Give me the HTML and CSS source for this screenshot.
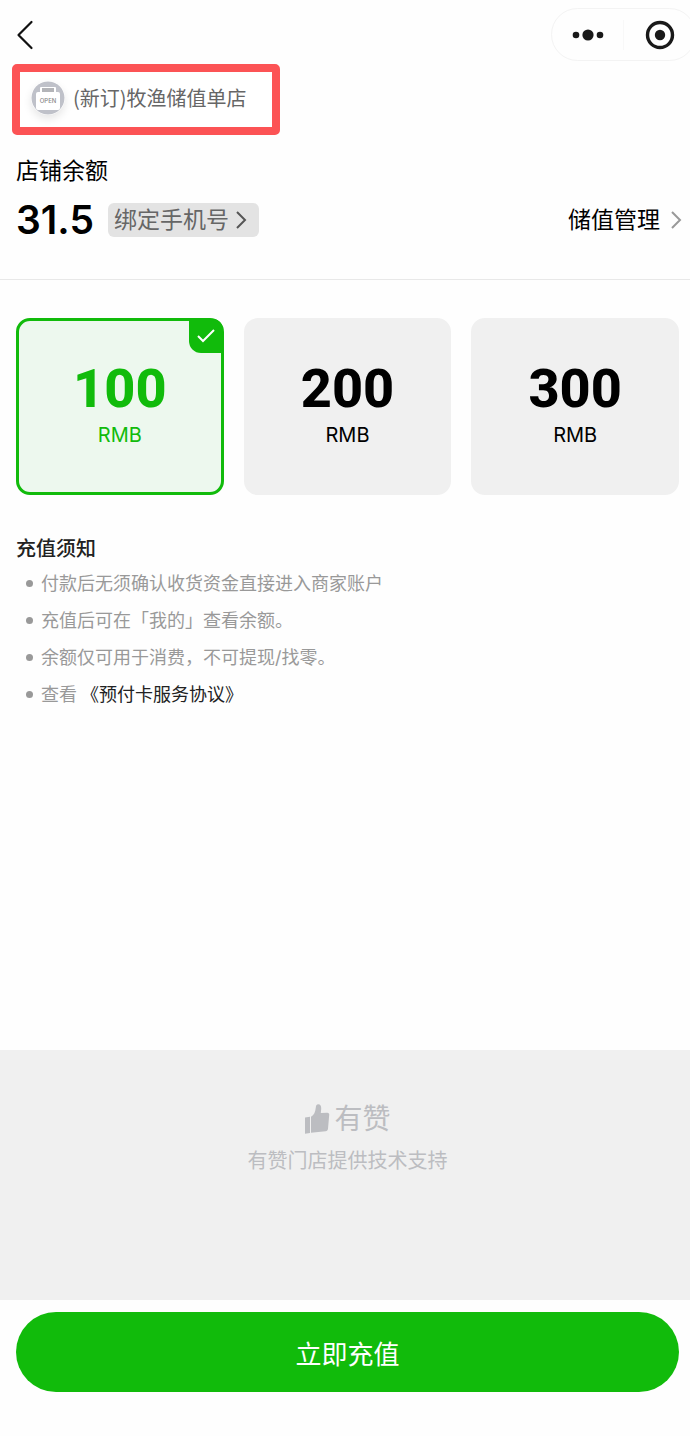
FILE: index.html
```
<!DOCTYPE html>
<html lang="zh-CN">
<head>
    <meta charset="UTF-8">
    <meta name="viewport" content="width=device-width, initial-scale=1.0">
    <title>储值</title>
    <link rel="stylesheet" href="styles.css">
</head>
<body>
    <header class="navbar">
        <button class="back" type="button" aria-label="返回">
            <svg width="18" height="30" viewBox="0 0 18 30"><path d="M15.500 2 2.500 15l13 13" fill="none" stroke="#111" stroke-width="2.200" stroke-linecap="round" stroke-linejoin="round"/></svg>
        </button>
        <div class="capsule">
            <button type="button" aria-label="更多">
                <svg width="32" height="14" viewBox="0 0 32 14" fill="#191919"><circle cx="4" cy="7" r="3.300"/><circle cx="16" cy="7" r="5.600"/><circle cx="28" cy="7" r="3.300"/></svg>
            </button>
            <button type="button" aria-label="关闭">
                <svg width="30" height="30" viewBox="0 0 30 30"><circle cx="15" cy="15" r="12.500" fill="none" stroke="#191919" stroke-width="3.400"/><circle cx="15" cy="15" r="5.200" fill="#191919"/></svg>
            </button>
        </div>
    </header>

    <main>
        <div class="shop">
            <svg class="shop-logo" width="34" height="34" viewBox="0 0 34 34">
                <circle cx="17" cy="17" r="16.500" fill="#bfc1c9"/>
                <rect x="9" y="6" width="16" height="8" rx="1" fill="#fff"/>
                <rect x="11" y="7" width="12" height="4" fill="#b3b4b8"/>
                <rect x="5" y="11" width="24" height="18" rx="2" fill="#fff"/>
                <text x="17" y="22" text-anchor="middle" class="logo-text">OPEN</text>
            </svg>
            <span>(新订)牧渔储值单店</span>
        </div>

        <!-- 余额 -->
        <section class="balance">
            <h2>店铺余额</h2>
            <div class="balance-row">
                <strong class="amount">31.5</strong>
                <button class="bind" type="button">绑定手机号
                    <svg width="12" height="20" viewBox="0 0 12 20"><path d="m2 2 8 8-8 8" fill="none" stroke="#555" stroke-width="2"/></svg>
                </button>
                <a class="manage" href="#">储值管理
                    <svg width="12" height="20" viewBox="0 0 12 20"><path d="m2 2 8 8-8 8" fill="none" stroke="#999" stroke-width="2"/></svg>
                </a>
            </div>
        </section>

        <!-- 充值金额 -->
        <form class="cards" id="recharge">
            <label class="card">
                <input type="radio" name="money" value="100" checked>
                <span class="money">100</span>
                <span class="unit">RMB</span>
                <span class="tick"><svg width="20" height="16" viewBox="0 0 20 16"><path d="m2 8 5 5L18 2" fill="none" stroke="#fff" stroke-width="2"/></svg></span>
            </label>
            <label class="card">
                <input type="radio" name="money" value="200">
                <span class="money">200</span>
                <span class="unit">RMB</span>
                <span class="tick"><svg width="20" height="16" viewBox="0 0 20 16"><path d="m2 8 5 5L18 2" fill="none" stroke="#fff" stroke-width="2"/></svg></span>
            </label>
            <label class="card">
                <input type="radio" name="money" value="300">
                <span class="money">300</span>
                <span class="unit">RMB</span>
                <span class="tick"><svg width="20" height="16" viewBox="0 0 20 16"><path d="m2 8 5 5L18 2" fill="none" stroke="#fff" stroke-width="2"/></svg></span>
            </label>
        </form>

        <section class="notice">
            <h3>充值须知</h3>
            <ul>
                <li>付款后无须确认收货资金直接进入商家账户</li>
                <li>充值后可在「我的」查看余额。</li>
                <li>余额仅可用于消费，不可提现/找零。</li>
                <li>查看 <a href="#">《预付卡服务协议》</a></li>
            </ul>
        </section>
    </main>

    <footer class="support">
        <div class="brand">
            <svg width="26" height="30" viewBox="0 0 26 30" fill="#bcbdc1"><path d="M1 13.500 6 12.800V29l-5 .8zM7 12.800c3-1.800 4.400-4.800 4.800-9.300C12 1.200 12.800.2 14.200.2c2.200 0 3.200 2 3 4.800L16.800 9l6.500-.3c1.500 0 2.100 1 1.900 2.200L24 24.800c-.2 1.400-1 2.200-2.400 2.400L7 28.800z"/></svg>
            <span>有赞</span>
        </div>
        <p>有赞门店提供技术支持</p>
    </footer>

    <div class="submit-bar">
        <button class="submit" type="submit" form="recharge">立即充值</button>
    </div>
</body>
</html>
```
FILE: styles.css
```
* {
    box-sizing: border-box;
}

body {
    margin: 0;
    min-height: 100vh;
    display: flex;
    flex-direction: column;
    background-color: #fefefe;
    color: #000;
    font-family: Inter, "Noto Sans CJK SC", sans-serif;
}

h2, h3, p, ul {
    margin: 0;
    padding: 0;
    font-weight: 400;
}

button {
    border: none;
    padding: 0;
    background: none;
    font-family: inherit;
    cursor: pointer;
}

a {
    color: inherit;
    text-decoration: none;
}

svg {
    display: block;
    flex-shrink: 0;
}

main {
    flex: 1;
}

/* 顶部导航 */
.navbar {
    display: flex;
    justify-content: space-between;
    align-items: center;
    height: 64px;
    padding-left: 16px;
    overflow: hidden;
}

.back {
    padding-top: 6px;
}

.capsule {
    display: flex;
    align-items: center;
    width: 145px;
    height: 53px;
    margin: 5px -6px 0 0;
    border: 1px solid #f3f3f3;
    border-radius: 27px;
}

.capsule button {
    flex: 1;
    display: flex;
    justify-content: center;
}

.capsule button + button {
    border-left: 1px solid #f8f8f8;
}

.shop {
    display: flex;
    align-items: center;
    gap: 8px;
    width: fit-content;
    height: 71px;
    margin-left: 12px;
    padding: 0 25px 3px 11px;
    border: 8px solid #fc5355;
    border-radius: 5px;
    background-color: #fff;
    color: #666;
    font-family: "Noto Sans CJK SC", sans-serif;
    font-size: 20px;
    line-height: 28px;
}

.shop-logo {
    border-radius: 50%;
    box-shadow: 0 4px 8px rgba(0, 0, 0, 0.1);
}

.logo-text {
    font: 500 6px Inter, sans-serif;
    fill: #888;
}

.balance {
    padding: 20px 8px 42px 16px;
    border-bottom: 1px solid #e8e8e8;
}

.balance h2 {
    font-size: 23px;
    line-height: 32px;
}

.balance-row {
    display: flex;
    align-items: center;
    margin-top: 16px;
}

.amount {
    font-size: 39px;
    font-weight: 600;
    line-height: 34px;
}

.bind {
    display: flex;
    align-items: center;
    gap: 6px;
    height: 34px;
    margin-left: 14px;
    padding: 0 12px 0 6px;
    border-radius: 6px;
    background-color: #e3e3e3;
    color: #666;
    font-size: 23px;
    line-height: 34px;
}

.manage {
    display: flex;
    align-items: center;
    gap: 10px;
    margin-left: auto;
    font-size: 23px;
    line-height: 34px;
}

/* 金额卡片 */
.cards {
    display: grid;
    grid-template-columns: repeat(3, 1fr);
    gap: 20px;
    padding: 38px 11px 0 16px;
}

.card {
    position: relative;
    display: flex;
    flex-direction: column;
    align-items: center;
    height: 177px;
    padding-top: 36px;
    border: 3px solid #f0f0f0;
    border-radius: 14px;
    background-color: #f0f0f0;
    cursor: pointer;
}

.card input {
    position: absolute;
    opacity: 0;
}

.money {
    font-family: Roboto, sans-serif;
    font-size: 54px;
    font-weight: 800;
    line-height: 64px;
}

.unit {
    font-size: 20px;
    line-height: 28px;
}

.tick {
    display: none;
    position: absolute;
    top: -2px;
    right: -2px;
    width: 34px;
    height: 34px;
    align-items: center;
    justify-content: center;
    border-radius: 0 10px 0 12px;
    background-color: #11bb0b;
}

.card:has(input:checked) {
    border-color: #11bb0b;
    background-color: #edf8ee;
    color: #11bb0b;
}

.card input:checked ~ .tick {
    display: flex;
}

.notice {
    padding: 38px 16px;
}

.notice h3 {
    color: #222;
    font-size: 20px;
    font-weight: 500;
    line-height: 32px;
}

.notice ul {
    list-style: none;
    color: #999;
    font-size: 18px;
    line-height: 37px;
}

.notice li {
    display: flex;
    align-items: center;
    padding-left: 10px;
}

.notice li::before {
    content: "";
    width: 7px;
    height: 7px;
    margin-right: 8px;
    border-radius: 50%;
    background-color: #999;
}

.notice a {
    margin-left: 4px;
    color: #222;
}

.support {
    display: flex;
    flex-direction: column;
    align-items: center;
    height: 250px;
    padding: 49px 11px 0 16px;
    background-color: #f0f0f0;
    color: #bcbdc1;
}

.brand {
    display: flex;
    align-items: center;
    gap: 4px;
    font-size: 28px;
    line-height: 40px;
}

.support p {
    margin-top: 8px;
    font-size: 20px;
    line-height: 28px;
}

.submit-bar {
    padding: 12px 11px 44px 16px;
    background-color: #fefefe;
}

.submit {
    display: block;
    width: 100%;
    height: 80px;
    border-radius: 40px;
    background-color: #11bb0b;
    color: #fff;
    font-size: 26px;
}
```
